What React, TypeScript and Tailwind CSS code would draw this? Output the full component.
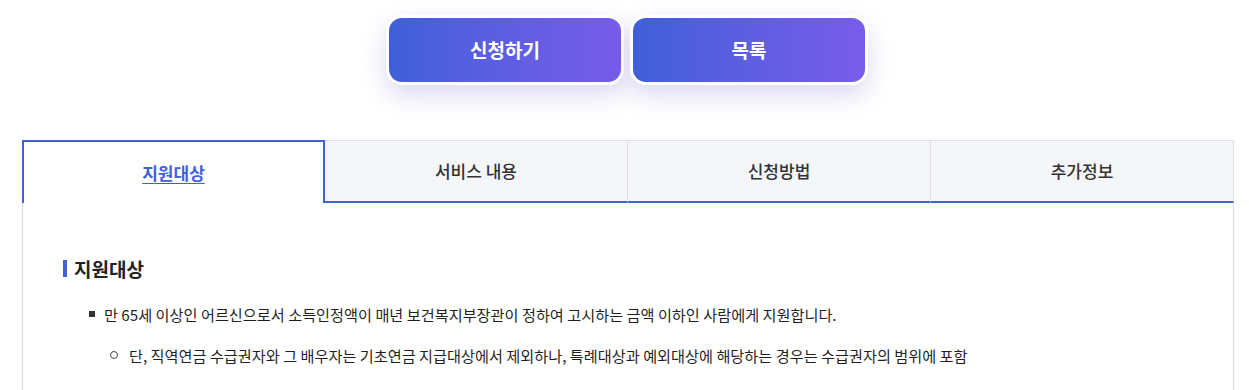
import React from 'react';

const tabs = ['지원대상', '서비스 내용', '신청방법', '추가정보'];

const font = { fontFamily: '"Noto Sans CJK KR", "Noto Sans", sans-serif' };

const ActionButton = ({ label }: { label: string }) => (
  <button className="w-[238px] h-[70px] rounded-[16px] border-[3px] border-white bg-gradient-to-r from-[#3e5fd8] to-[#785cea] text-white text-[19px] font-bold shadow-[0_10px_24px_rgba(90,80,200,0.22)]">
    {label}
  </button>
);

export default function App() {
  return (
    <div className="w-[1249px] h-[390px] bg-white overflow-hidden" style={font}>
      {/* action buttons */}
      <div className="flex justify-center gap-[6px] pt-[15px] pl-[5px]">
        <ActionButton label="신청하기" />
        <ActionButton label="목록" />
      </div>

      {/* tabs */}
      <div className="ml-[22px] w-[1212px] mt-[55px]">
        <div className="grid grid-cols-4 h-[63px]">
          {tabs.map((t, i) =>
            i === 0 ? (
              <div
                key={t}
                className="flex items-center justify-center bg-white border-t-2 border-x-2 border-[#3f61da] text-[17px] font-bold text-[#3f61da] underline underline-offset-[3px]"
              >
                {t}
              </div>
            ) : (
              <div
                key={t}
                className="flex items-center justify-center bg-[#f5f6fa] border-t border-r border-[#e0e0e4] border-b-2 border-b-[#3f61da] text-[17px] font-medium text-[#333]"
              >
                {t}
              </div>
            )
          )}
        </div>

        {/* panel */}
        <div className="border-x border-[#dcdcdc] h-[200px] pt-[56px] pl-[40px]">
          <h3 className="flex items-center gap-[7px] text-[19px] font-bold text-[#222] leading-none">
            <span className="w-[4px] h-[17px] bg-[#3f61da]" />
            지원대상
          </h3>
          <ul className="mt-[24px]">
            <li className="flex items-center h-[24px] pl-[26px] text-[15.2px] text-[#1f1f1f]">
              <span className="w-[6px] h-[6px] bg-[#333] mr-[9px]" />
              만 65세 이상인 어르신으로서 소득인정액이 매년 보건복지부장관이 정하여 고시하는 금액 이하인 사람에게 지원합니다.
            </li>
            <li className="flex items-center h-[24px] mt-[17px] pl-[47px] text-[15.2px] text-[#1f1f1f]">
              <span className="w-[8px] h-[8px] rounded-full border border-[#444] mr-[11px]" />
              단, 직역연금 수급권자와 그 배우자는 기초연금 지급대상에서 제외하나, 특례대상과 예외대상에 해당하는 경우는 수급권자의 범위에 포함
            </li>
          </ul>
        </div>
      </div>
    </div>
  );
}
